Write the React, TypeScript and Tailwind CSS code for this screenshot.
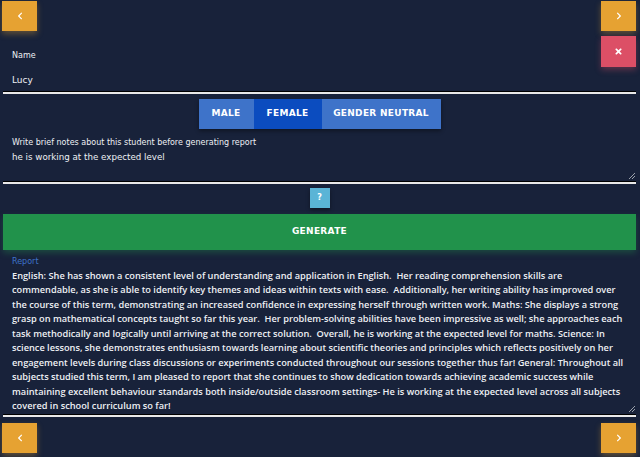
import React, { useLayoutEffect, useRef, useState } from 'react';
import { FaChevronLeft, FaChevronRight, FaTimes } from 'react-icons/fa';

const reportLines = [
  'English: She has shown a consistent level of understanding and application in English.  Her reading comprehension skills are',
  'commendable, as she is able to identify key themes and ideas within texts with ease.  Additionally, her writing ability has improved over',
  'the course of this term, demonstrating an increased confidence in expressing herself through written work. Maths: She displays a strong',
  'grasp on mathematical concepts taught so far this year.  Her problem-solving abilities have been impressive as well; she approaches each',
  'task methodically and logically until arriving at the correct solution.  Overall, he is working at the expected level for maths. Science: In',
  'science lessons, she demonstrates enthusiasm towards learning about scientific theories and principles which reflects positively on her',
  'engagement levels during class discussions or experiments conducted throughout our sessions together thus far! General: Throughout all',
  'subjects studied this term, I am pleased to report that she continues to show dedication towards achieving academic success while',
  'maintaining excellent behaviour standards both inside/outside classroom settings- He is working at the expected level across all subjects',
  'covered in school curriculum so far!',
];

const NavButton = ({ dir }: { dir: 'left' | 'right' }) => (
  <button className="w-[35px] h-[30px] bg-[#e6a232] flex items-center justify-center text-white shadow-[0_3px_6px_rgba(230,162,50,0.35)]">
    {dir === 'left' ? <FaChevronLeft size={8} /> : <FaChevronRight size={8} />}
  </button>
);

const Grip = () => (
  <svg width="6" height="6" viewBox="0 0 6 6" className="absolute right-[1px] bottom-[3px]">
    <path d="M6 0 L0 6 M6 3 L3 6" stroke="#9aa0aa" strokeWidth="1" />
  </svg>
);

// fit the widest report line into the textarea width
const ReportText = () => {
  const ref = useRef<HTMLDivElement>(null);
  const [size, setSize] = useState(10);
  useLayoutEffect(() => {
    if (!ref.current) return;
    const spans = Array.from(ref.current.querySelectorAll('span'));
    const max = Math.max(...spans.map((s) => s.getBoundingClientRect().width));
    if (max > 0) setSize((s) => (s * 612) / max);
  }, []);
  return (
    <div ref={ref} className="font-['Open_Sans',sans-serif] font-semibold leading-[14.45px] mt-[1px] whitespace-pre" style={{ fontSize: size }}>
      {reportLines.map((l, i) => (
        <div key={i}>
          <span>{l}</span>
        </div>
      ))}
    </div>
  );
};

export default function App() {
  return (
    <div className="w-[640px] h-[457px] bg-[#18223a] text-[#eef0f4] font-['DejaVu_Sans',sans-serif] pl-[3px] pr-[4px] pt-px overflow-hidden">
      <div className="flex justify-between -ml-px">
        <NavButton dir="left" />
        <NavButton dir="right" />
      </div>

      {/* name */}
      <div className="relative mt-[5px] h-[58px] pl-[9px] pt-[14px] border-b-2 border-[#e9e9e9] shadow-[inset_0_-1px_0_#000]">
        <div className="text-[8px] leading-[12px]">Name</div>
        <div className="text-[9px] leading-[14px] mt-[11px]">Lucy</div>
        <button className="absolute right-0 top-0 w-[35px] h-[31px] bg-[#dc4f66] flex items-center justify-center text-white shadow-[0_3px_6px_rgba(220,79,102,0.35)]">
          <FaTimes size={9} />
        </button>
      </div>

      {/* gender */}
      <div className="flex justify-center mt-[5px]">
        <div className="flex h-[30px] text-[9px] font-bold tracking-[0.3px] text-white shadow-[0_2px_4px_rgba(0,0,0,0.4)]">
          <div className="w-[55px] bg-[#3e73c9] flex items-center justify-center">MALE</div>
          <div className="w-[68px] bg-[#0b4cbf] flex items-center justify-center">FEMALE</div>
          <div className="w-[119px] bg-[#3e73c9] flex items-center justify-center">GENDER NEUTRAL</div>
        </div>
      </div>

      {/* notes */}
      <div className="relative mt-[5px] h-[50px] pl-[9px] pt-[3px] border-b-2 border-[#e9e9e9] shadow-[inset_0_-1px_0_#000]">
        <div className="text-[8px] leading-[12px]">Write brief notes about this student before generating report</div>
        <div className="text-[8.7px] leading-[14px] mt-[1px]">he is working at the expected level</div>
        <Grip />
      </div>

      <div className="flex justify-center mt-[4px]">
        <button className="w-[20px] h-[20px] bg-[#5ab4d6] text-white text-[8px] font-bold flex items-center justify-center shadow-[0_2px_4px_rgba(0,0,0,0.4)]">?</button>
      </div>

      <button className="mt-[6px] w-full h-[36px] bg-[#21924b] text-white text-[9px] font-bold tracking-[0.3px] shadow-[0_3px_6px_rgba(33,146,75,0.35)]">
        GENERATE
      </button>

      {/* report */}
      <div className="relative mt-[6px] pl-[9px] pb-px border-b-2 border-[#e9e9e9] shadow-[inset_0_-1px_0_#000]">
        <div className="text-[8px] leading-[12px] text-[#3e73c9]">Report</div>
        <ReportText />
        <Grip />
      </div>

      <div className="flex justify-between mt-[6px] -ml-px">
        <NavButton dir="left" />
        <NavButton dir="right" />
      </div>
    </div>
  );
}
